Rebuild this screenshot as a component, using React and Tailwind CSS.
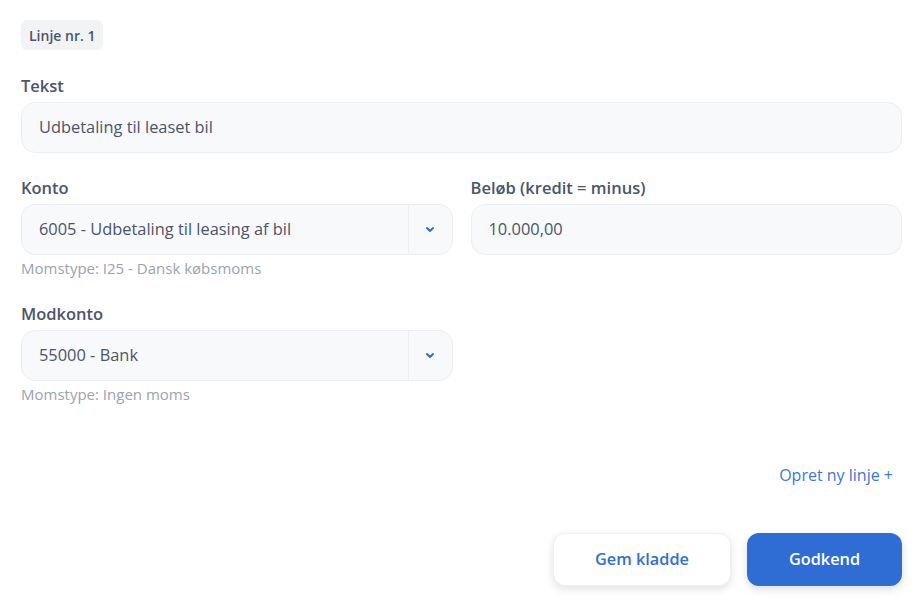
import React from 'react';

const font = { fontFamily: '"Open Sans", "Noto Sans", sans-serif' };

const Chevron = () => (
  <svg width="10" height="7" viewBox="0 0 10 7" fill="none">
    <path d="M2 2l3 3 3-3" stroke="#2f6fd6" strokeWidth="2" strokeLinecap="round" strokeLinejoin="round" />
  </svg>
);

const Label = ({ children }) => (
  <label className="block text-[16.5px] font-semibold leading-[22px] text-[#4a5568] mb-[5px]">{children}</label>
);

const TextInput = ({ value }) => (
  <div className="h-[51px] flex items-center px-[17px] bg-[#f8f9fb] border border-[#eceef1] rounded-[14px] text-[16.4px] text-[#4a5568]">
    {value}
  </div>
);

const SelectBox = ({ value }) => (
  <div className="h-[51px] flex bg-[#f8f9fb] border border-[#eceef1] rounded-[14px] text-[16.4px] text-[#4a5568]">
    <div className="flex-1 flex items-center px-[17px]">{value}</div>
    <div className="w-[44px] flex items-center justify-center border-l border-[#eceef1]">
      <Chevron />
    </div>
  </div>
);

const Helper = ({ children }) => (
  <p className="mt-[3px] text-[15px] leading-5 text-[#9aa3ae]">{children}</p>
);

export default function App() {
  return (
    <div className="min-h-screen bg-white px-[21px] pt-[20px] pr-[18px]" style={font}>
      <span className="inline-flex items-center h-[30px] px-[8px] rounded-md bg-[#f2f3f5] text-[14px] font-semibold text-[#4a5568]">
        Linje nr. 1
      </span>

      <div className="mt-[25px]">
        <Label>Tekst</Label>
        <TextInput value="Udbetaling til leaset bil" />
      </div>

      <div className="mt-[24px] grid grid-cols-2 gap-[18px]">
        <div>
          <Label>Konto</Label>
          <SelectBox value="6005 - Udbetaling til leasing af bil" />
          <Helper>Momstype: I25 - Dansk købsmoms</Helper>
        </div>
        <div>
          <Label>Beløb (kredit = minus)</Label>
          <TextInput value="10.000,00" />
        </div>
      </div>

      <div className="mt-[25px] grid grid-cols-2 gap-[18px]">
        <div>
          <Label>Modkonto</Label>
          <SelectBox value="55000 - Bank" />
          <Helper>Momstype: Ingen moms</Helper>
        </div>
      </div>

      <div className="mt-[59px] flex justify-end pr-[9px]">
        <button className="text-base leading-6 text-[#3b78d8]">Opret ny linje +</button>
      </div>

      <div className="mt-[46px] flex justify-end gap-[16px]">
        <button className="w-[178px] h-[53px] rounded-[12px] bg-white border border-[#eef0f3] shadow-[0_3px_8px_rgba(0,0,0,0.12)] text-[16.3px] font-semibold text-[#2f6fd6]">
          Gem kladde
        </button>
        <button className="w-[155px] h-[53px] rounded-[12px] bg-[#2f6dd5] shadow-[0_3px_8px_rgba(0,0,0,0.15)] text-[16.3px] font-semibold text-white">
          Godkend
        </button>
      </div>
    </div>
  );
}
